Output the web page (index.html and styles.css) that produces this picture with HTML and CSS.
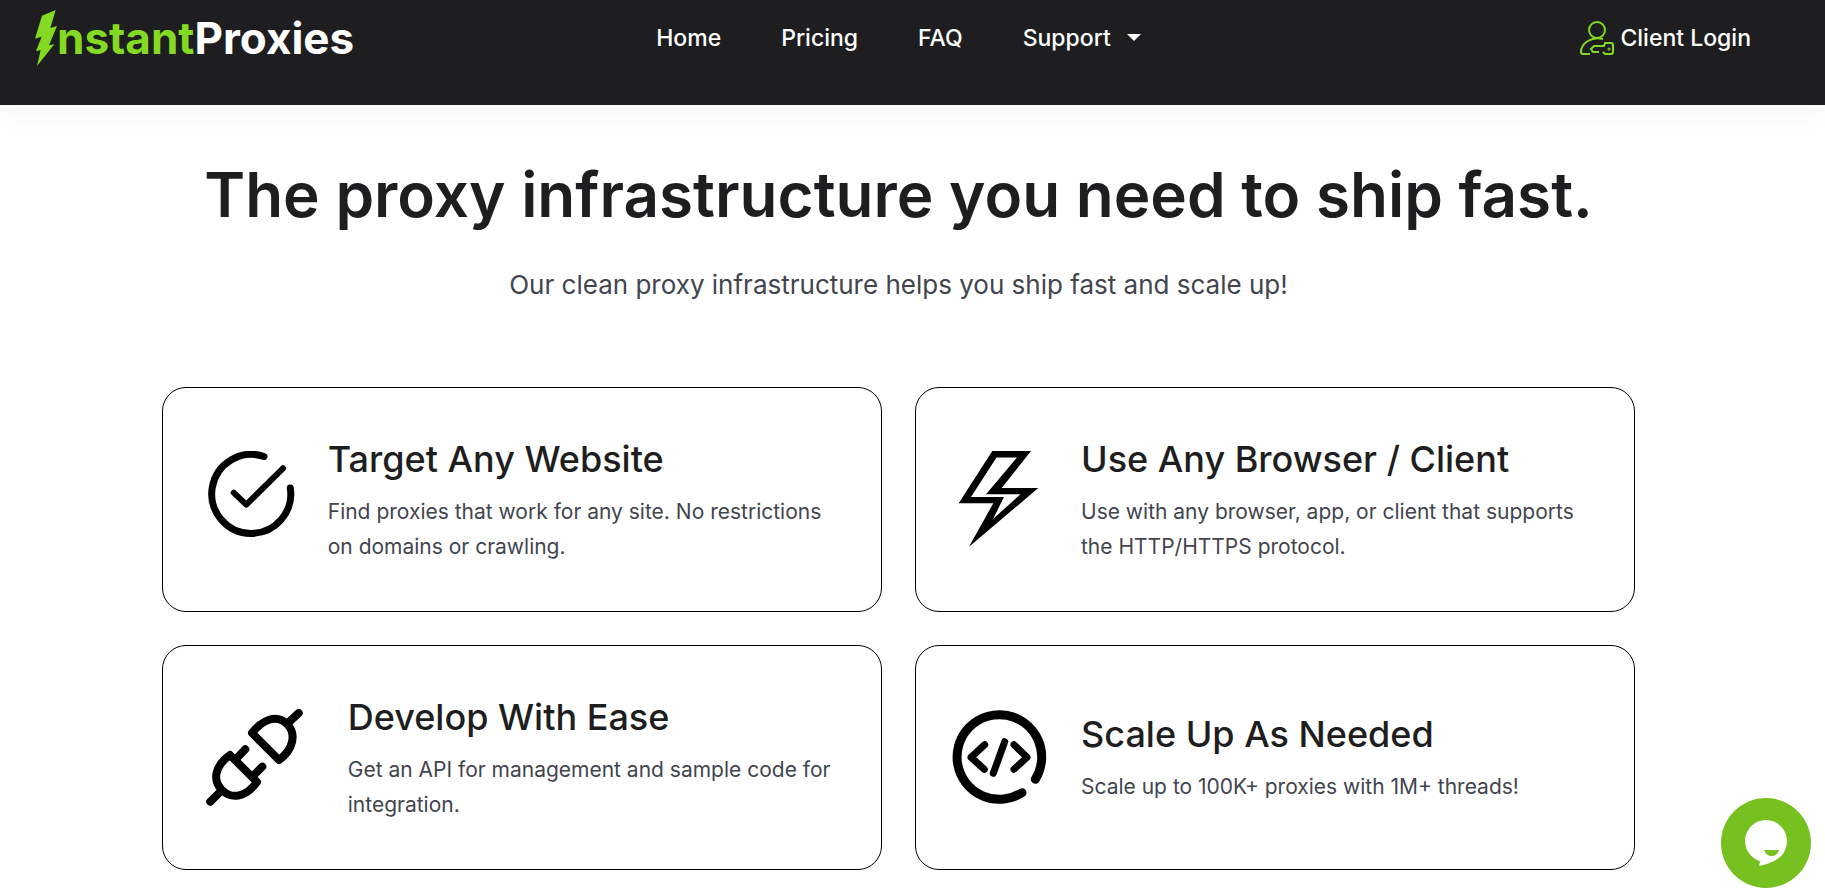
FILE: index.html
```html
<!DOCTYPE html>
<html lang="en">

<head>
  <meta charset="UTF-8">
  <meta name="viewport" content="width=device-width, initial-scale=1.0">
  <title>InstantProxies</title>
  <link rel="stylesheet" href="styles.css">
</head>

<body>
  <header class="header">
    <a class="logo" href="#">
      <svg class="logo-bolt" viewBox="0 0 66 168" aria-hidden="true">
        <path d="M62 0L21 17L0 86L20 80L3 124L17 120L6 168L58 103L42 106L66 48L46 54Z"/>
      </svg><span class="logo-green">nstant</span><span>Proxies</span>
    </a>
    <nav class="nav">
      <a href="#">Home</a>
      <a href="#">Pricing</a>
      <a href="#">FAQ</a>
      <a class="nav-support" href="#">Support <span class="caret"></span></a>
    </nav>
    <a class="login" href="#">
      <svg class="login-icon" viewBox="0 0 34 34" aria-hidden="true">
        <circle cx="17" cy="9" r="8"/>
        <path d="M23 18C12 15 1 22 1 31Q1 33 3 33H10"/>
        <path d="M19 31H13L11 28L14 25H24L25 22H31Q33 22 33 24V31Q33 33 31 33H25L23 31"/>
        <circle cx="29" cy="28" r="0.5"/>
      </svg>
      Client Login
    </a>
  </header>

  <main class="features">
    <h1>The proxy infrastructure you need to ship fast.</h1>
    <p class="subtitle">Our clean proxy infrastructure helps you ship fast and scale up!</p>

    <div class="cards">
      <div class="card">
        <svg class="card-icon" viewBox="0 0 97 97" aria-hidden="true">
          <path class="ring" d="M65 5.5A39.5 39.5 0 1 0 91.3 37"/>
          <path class="thin" d="M34.7 41.7L47.3 53.7L84 17.3"/>
        </svg>
        <div class="card-text">
          <h2>Target Any Website</h2>
          <p>Find proxies that work for any site. No restrictions on domains or crawling.</p>
        </div>
      </div>

      <div class="card">
        <svg class="card-icon" viewBox="0 0 97 97" aria-hidden="true">
          <path class="solid" d="M40.3 0H79L49.7 37H86.3L17 95.7L41.3 52.3H6.7ZM44.5 6.5L19 46H52L41 68L68.5 43.3H34L65 6.5Z"/>
        </svg>
        <div class="card-text">
          <h2>Use Any Browser / Client</h2>
          <p>Use with any browser, app, or client that supports the HTTP/HTTPS protocol.</p>
        </div>
      </div>

      <div class="card">
        <svg class="card-icon card-icon-wide" viewBox="0 0 117 97" aria-hidden="true">
          <path class="ring" d="M11.3 92.7L23 81M31 46L58 73C47 88 33 91 23 81C13 71 16 57 31 46ZM46.3 40.3L37 50M63.3 57.7L55 66"/>
          <path class="ring" d="M99.7 4L89 14M53 24L80 51C94 41 98 25 88 15C78 5 64 10 53 24Z"/>
        </svg>
        <div class="card-text">
          <h2>Develop With Ease</h2>
          <p>Get an API for management and sample code for integration.</p>
        </div>
      </div>

      <div class="card">
        <svg class="card-icon" viewBox="0 0 97 97" aria-hidden="true">
          <path class="thick" d="M83.3 70.3A42.3 42.3 0 1 0 70 83.7"/>
          <path class="ring" d="M32.7 35.7L19 48.3L32.3 60.3M62 35.7L75 48.3L62 60.3M52.7 32.7L41.3 64.3"/>
        </svg>
        <div class="card-text">
          <h2>Scale Up As Needed</h2>
          <p>Scale up to 100K+ proxies with 1M+ threads!</p>
        </div>
      </div>
    </div>
  </main>

  <button class="chat" aria-label="Open chat">
    <svg viewBox="0 0 90 90" aria-hidden="true">
      <circle class="bubble" cx="45" cy="43" r="21"/>
      <path class="bubble" d="M40 60L38 68Q60 63 64 52L45 43Z"/>
      <path class="smile" d="M43 52H58Q56 58 51 58Q45 58 43 52Z"/>
    </svg>
  </button>
</body>

</html>
```

FILE: styles.css
```css
* {
  box-sizing: border-box;
}

body {
  margin: 0;
  font-family: Inter, "Liberation Sans", sans-serif;
  background-color: #fff;
  color: #1e1e20;
}

a {
  color: #fff;
  text-decoration: none;
}

/* Header */
.header {
  display: grid;
  grid-template-columns: 1fr auto 1fr;
  align-items: center;
  height: 105px;
  padding: 0 28px 30px 0;
  background-color: #1e1e20;
  box-shadow: 0 4px 30px rgba(0, 0, 0, 0.06);
}

.logo {
  display: flex;
  align-items: center;
  margin-left: 35px;
  font-size: 44px;
  font-weight: 700;
}

.logo-bolt {
  width: 22px;
  height: 56px;
  fill: #84da22;
}

.logo-green {
  color: #84da22;
}

.nav {
  display: flex;
  gap: 60px;
  font-size: 23px;
  font-weight: 500;
}

.nav-support {
  display: flex;
  align-items: center;
  gap: 16px;
}

.caret {
  border: 7px solid transparent;
  border-top-color: #fff;
  border-bottom: 0;
}

.login {
  display: flex;
  align-items: center;
  justify-self: end;
  gap: 6px;
  margin-right: 46px;
  font-size: 23px;
  font-weight: 500;
}

.login-icon {
  width: 34px;
  height: 34px;
  overflow: visible;
  fill: none;
  stroke: #84da22;
  stroke-width: 2;
}

/* Features */
.features {
  padding: 50px 28px 24px 0;
  text-align: center;
}

h1 {
  margin: 0;
  font-size: 62px;
  line-height: 80px;
  font-weight: 600;
}

.subtitle {
  margin: 30px 0 82px;
  font-size: 26px;
  line-height: 40px;
  color: #42454e;
}

.cards {
  display: grid;
  grid-template-columns: 1fr 1fr;
  gap: 33px;
  width: 82%;
  margin: 0 auto;
  text-align: left;
}

.card {
  display: flex;
  align-items: center;
  gap: 32px;
  min-height: 225px;
  padding: 36px;
  border: 1px solid #000;
  border-radius: 24px;
}

.card-icon {
  flex: none;
  width: 97px;
  height: 97px;
  fill: none;
  stroke: #000;
  stroke-linecap: round;
  stroke-linejoin: round;
}

.card-icon-wide {
  width: 117px;
}

.thin {
  stroke-width: 6;
}

.ring {
  stroke-width: 7;
}

.card-icon-wide .ring {
  stroke-width: 8;
}

.thick {
  stroke-width: 9;
}

.solid {
  fill: #000;
  fill-rule: evenodd;
  stroke: none;
}

h2 {
  margin: 0 0 12px;
  font-size: 36px;
  line-height: 46px;
  font-weight: 500;
}

.card p {
  margin: 0;
  font-size: 21px;
  line-height: 35px;
  color: #42454e;
}

/* Chat button */
.chat {
  position: fixed;
  right: 14px;
  bottom: 7px;
  width: 90px;
  height: 90px;
  padding: 0;
  border: 0;
  border-radius: 50%;
  background-color: #76c11f;
  cursor: pointer;
}

.chat svg {
  display: block;
}

.bubble {
  fill: #fff;
}

.smile {
  fill: #76c11f;
}
```
